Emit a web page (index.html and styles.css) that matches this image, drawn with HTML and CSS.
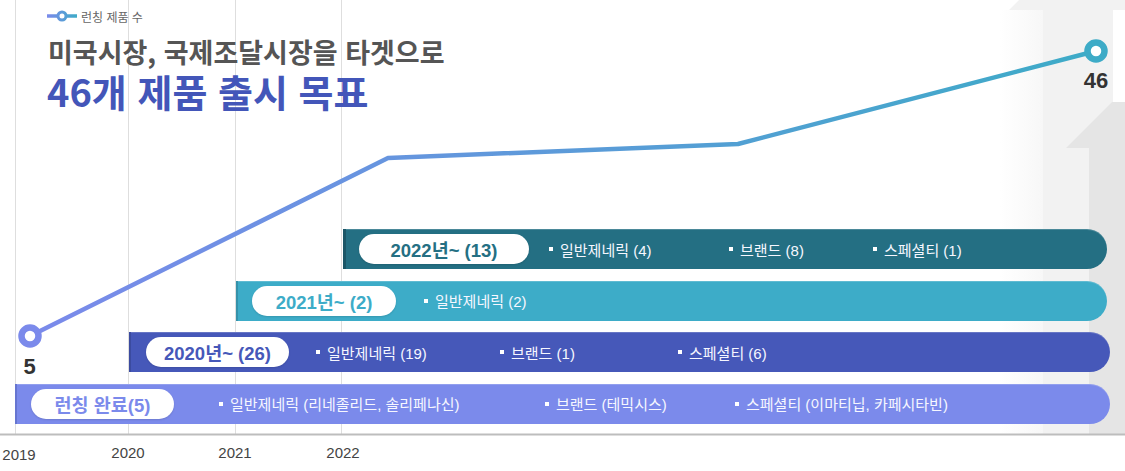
FILE: index.html
```html
<!DOCTYPE html>
<html lang="ko">
<head>
<meta charset="utf-8">
<title>런칭 제품 수</title>
<link rel="stylesheet" href="styles.css">
</head>
<body>
<div class="page">
  <svg class="canvas" width="1125" height="471" viewBox="0 0 1125 471" xmlns="http://www.w3.org/2000/svg">
    <defs>
      <linearGradient id="fade" x1="0" y1="0" x2="1" y2="0">
        <stop offset="0" stop-color="#ffffff"/>
        <stop offset="1" stop-color="#f7f7f7"/>
      </linearGradient>
      <linearGradient id="lineGrad" gradientUnits="userSpaceOnUse" x1="30" y1="0" x2="1096" y2="0">
        <stop offset="0" stop-color="#7b8aeb"/>
        <stop offset="1" stop-color="#3dabc7"/>
      </linearGradient>
    </defs>
    <rect x="1000" y="10" width="43" height="424" fill="url(#fade)"/>
    <polygon points="1009,10 1019,0 1125,0 1125,10 1113,10 1113,434 1043,434 1043,10" fill="#f2f2f2"/>
    <polygon points="1066,148 1112,102 1125,102 1125,434 1089,434 1089,148" fill="#e5e5e5"/>
    <g class="grid">
      <line x1="15.5" y1="0" x2="15.5" y2="434"/>
      <line x1="128.5" y1="0" x2="128.5" y2="434"/>
      <line x1="235.5" y1="0" x2="235.5" y2="434"/>
      <line x1="341.5" y1="0" x2="341.5" y2="434"/>
    </g>
    <line class="axis" x1="0" y1="434.5" x2="1125" y2="434.5"/>
    <g class="years">
      <text x="19" y="460">2019</text>
      <text x="128" y="458">2020</text>
      <text x="235" y="458">2021</text>
      <text x="343" y="458">2022</text>
    </g>
    <polyline class="trend" points="30,336 388,158 738,144 1096,51"/>
    <circle class="pt pt-start" cx="30" cy="336" r="8.5"/>
    <circle class="pt pt-end" cx="1096" cy="51" r="8.5"/>
    <text class="pt-label" x="29.5" y="374">5</text>
    <text class="pt-label" x="1096" y="88">46</text>
  </svg>

  <header class="head">
    <div class="legend">
      <svg class="legend-icon" width="30" height="12" viewBox="0 0 30 12" xmlns="http://www.w3.org/2000/svg">
        <defs>
          <linearGradient id="legGrad" gradientUnits="userSpaceOnUse" x1="0" y1="0" x2="30" y2="0">
            <stop offset="0" stop-color="#7b8aeb"/>
            <stop offset="1" stop-color="#3dabc7"/>
          </linearGradient>
        </defs>
        <line x1="0" y1="6" x2="30" y2="6" stroke="url(#legGrad)" stroke-width="3.5"/>
        <circle cx="15" cy="6" r="4" fill="#fff" stroke="url(#legGrad)" stroke-width="3"/>
      </svg>
      <span>런칭 제품 수</span>
    </div>
    <h1 class="title-sub">미국시장, 국제조달시장을 타겟으로</h1>
    <h2 class="title-main">46개 제품 출시 목표</h2>
  </header>

  <div class="bars">
    <div class="bar bar-2022">
      <div class="pill">2022년~ (13)</div>
      <ul class="items">
        <li class="item">일반제네릭 (4)</li>
        <li class="item">브랜드 (8)</li>
        <li class="item">스페셜티 (1)</li>
      </ul>
    </div>
    <div class="bar bar-2021">
      <div class="pill">2021년~ (2)</div>
      <ul class="items">
        <li class="item">일반제네릭 (2)</li>
      </ul>
    </div>
    <div class="bar bar-2020">
      <div class="pill">2020년~ (26)</div>
      <ul class="items">
        <li class="item">일반제네릭 (19)</li>
        <li class="item">브랜드 (1)</li>
        <li class="item">스페셜티 (6)</li>
      </ul>
    </div>
    <div class="bar bar-done">
      <div class="pill">런칭 완료(5)</div>
      <ul class="items">
        <li class="item">일반제네릭 (리네졸리드, 솔리페나신)</li>
        <li class="item">브랜드 (테믹시스)</li>
        <li class="item">스페셜티 (이마티닙, 카페시타빈)</li>
      </ul>
    </div>
  </div>
</div>
</body>
</html>
```

FILE: styles.css
```css
* { box-sizing: border-box; }

html, body {
  margin: 0;
  padding: 0;
  background: #ffffff;
}

body {
  font-family: "Liberation Sans", "Noto Sans CJK KR", sans-serif;
}

.page {
  position: relative;
  width: 1125px;
  height: 471px;
  overflow: hidden;
  background: #ffffff;
}

.canvas {
  position: absolute;
  top: 0;
  left: 0;
}

.grid line {
  stroke: #dedede;
  stroke-width: 1;
}

.axis {
  stroke: #bdbdbd;
  stroke-width: 2;
}

.years text {
  font-family: "Liberation Sans", sans-serif;
  font-size: 15px;
  fill: #444444;
  text-anchor: middle;
}

.trend {
  fill: none;
  stroke: url(#lineGrad);
  stroke-width: 4.5;
  stroke-linejoin: round;
}

.pt {
  fill: #ffffff;
  stroke-width: 6.5;
}

.pt-start { stroke: #7b8aeb; }
.pt-end { stroke: #3dabc7; }

.pt-label {
  font-family: "Liberation Sans", sans-serif;
  font-weight: 700;
  font-size: 22px;
  fill: #333333;
  text-anchor: middle;
}

/* header */
.head {
  position: relative;
  padding: 8px 0 0 47px;
}

.legend {
  display: flex;
  align-items: center;
  gap: 4px;
  height: 16px;
  font-size: 12px;
  color: #666666;
}

.legend-icon { display: block; }

.title-sub {
  margin: 13px 0 0 1px;
  font-family: "Noto Sans CJK KR", sans-serif;
  font-size: 27px;
  line-height: 30px;
  font-weight: 700;
  color: #555555;
  white-space: nowrap;
}

.title-main {
  margin: 4px 0 0 0;
  font-family: "Noto Sans CJK KR", sans-serif;
  font-size: 38px;
  line-height: 40px;
  font-weight: 700;
  color: #4356b9;
  white-space: nowrap;
}

/* bars */
.bars {
  position: relative;
  margin-top: 118px;
  display: grid;
  row-gap: 11.5px;
}

.bar {
  display: flex;
  align-items: center;
  height: 40px;
  padding-left: 16px;
  border-radius: 0 20px 20px 0;
  color: #f6f7ff;
  font-size: 15px;
  box-shadow: inset 0 1px 0 rgba(255, 255, 255, 0.18);
}

.bar-2022 {
  margin: 0 18px 0 343px;
  background: #246f83;
  border-left: 3px solid #1b5667;
  padding-left: 13px;
}
.bar-2021 {
  margin: 0 18px 0 236px;
  background: #3dacc8;
  border-left: 2px solid #3592aa;
  padding-left: 14px;
}
.bar-2020 {
  margin: 0 15px 0 129px;
  background: #4658b9;
  border-left: 2px solid #3b4b9f;
  padding-left: 15px;
}
.bar-done {
  margin: 0 15px 0 15px;
  background: #7b8aeb;
  border-left: 2px solid #6675d0;
  padding-left: 14px;
}

.pill {
  flex: none;
  display: flex;
  align-items: center;
  justify-content: center;
  height: 30px;
  border-radius: 15px;
  background: #ffffff;
  font-size: 18.5px;
  font-weight: 700;
  box-shadow: 0 1px 2px rgba(0, 0, 0, 0.12);
}

.bar-2022 .pill { width: 170px; color: #246f83; }
.bar-2021 .pill { width: 144px; color: #3dacc8; }
.bar-2020 .pill { width: 143px; color: #4658b9; }
.bar-done .pill { width: 143px; color: #7b8aeb; }

.items {
  display: flex;
  align-items: center;
  margin: 0;
  padding: 0;
  list-style: none;
}

.item {
  display: flex;
  align-items: center;
  flex: none;
  white-space: nowrap;
}

.item::before {
  content: "";
  width: 4px;
  height: 4px;
  margin-right: 7px;
  background: #ffffff;
}

.bar-2022 .items { margin-left: 20px; }
.bar-2022 .item:nth-child(1) { width: 180px; }
.bar-2022 .item:nth-child(2) { width: 144px; }

.bar-2021 .items { margin-left: 28px; }

.bar-2020 .items { margin-left: 27px; }
.bar-2020 .item:nth-child(1) { width: 184px; }
.bar-2020 .item:nth-child(2) { width: 178px; }

.bar-done .items { margin-left: 45px; }
.bar-done .item:nth-child(1) { width: 326px; }
.bar-done .item:nth-child(2) { width: 190px; }
```
